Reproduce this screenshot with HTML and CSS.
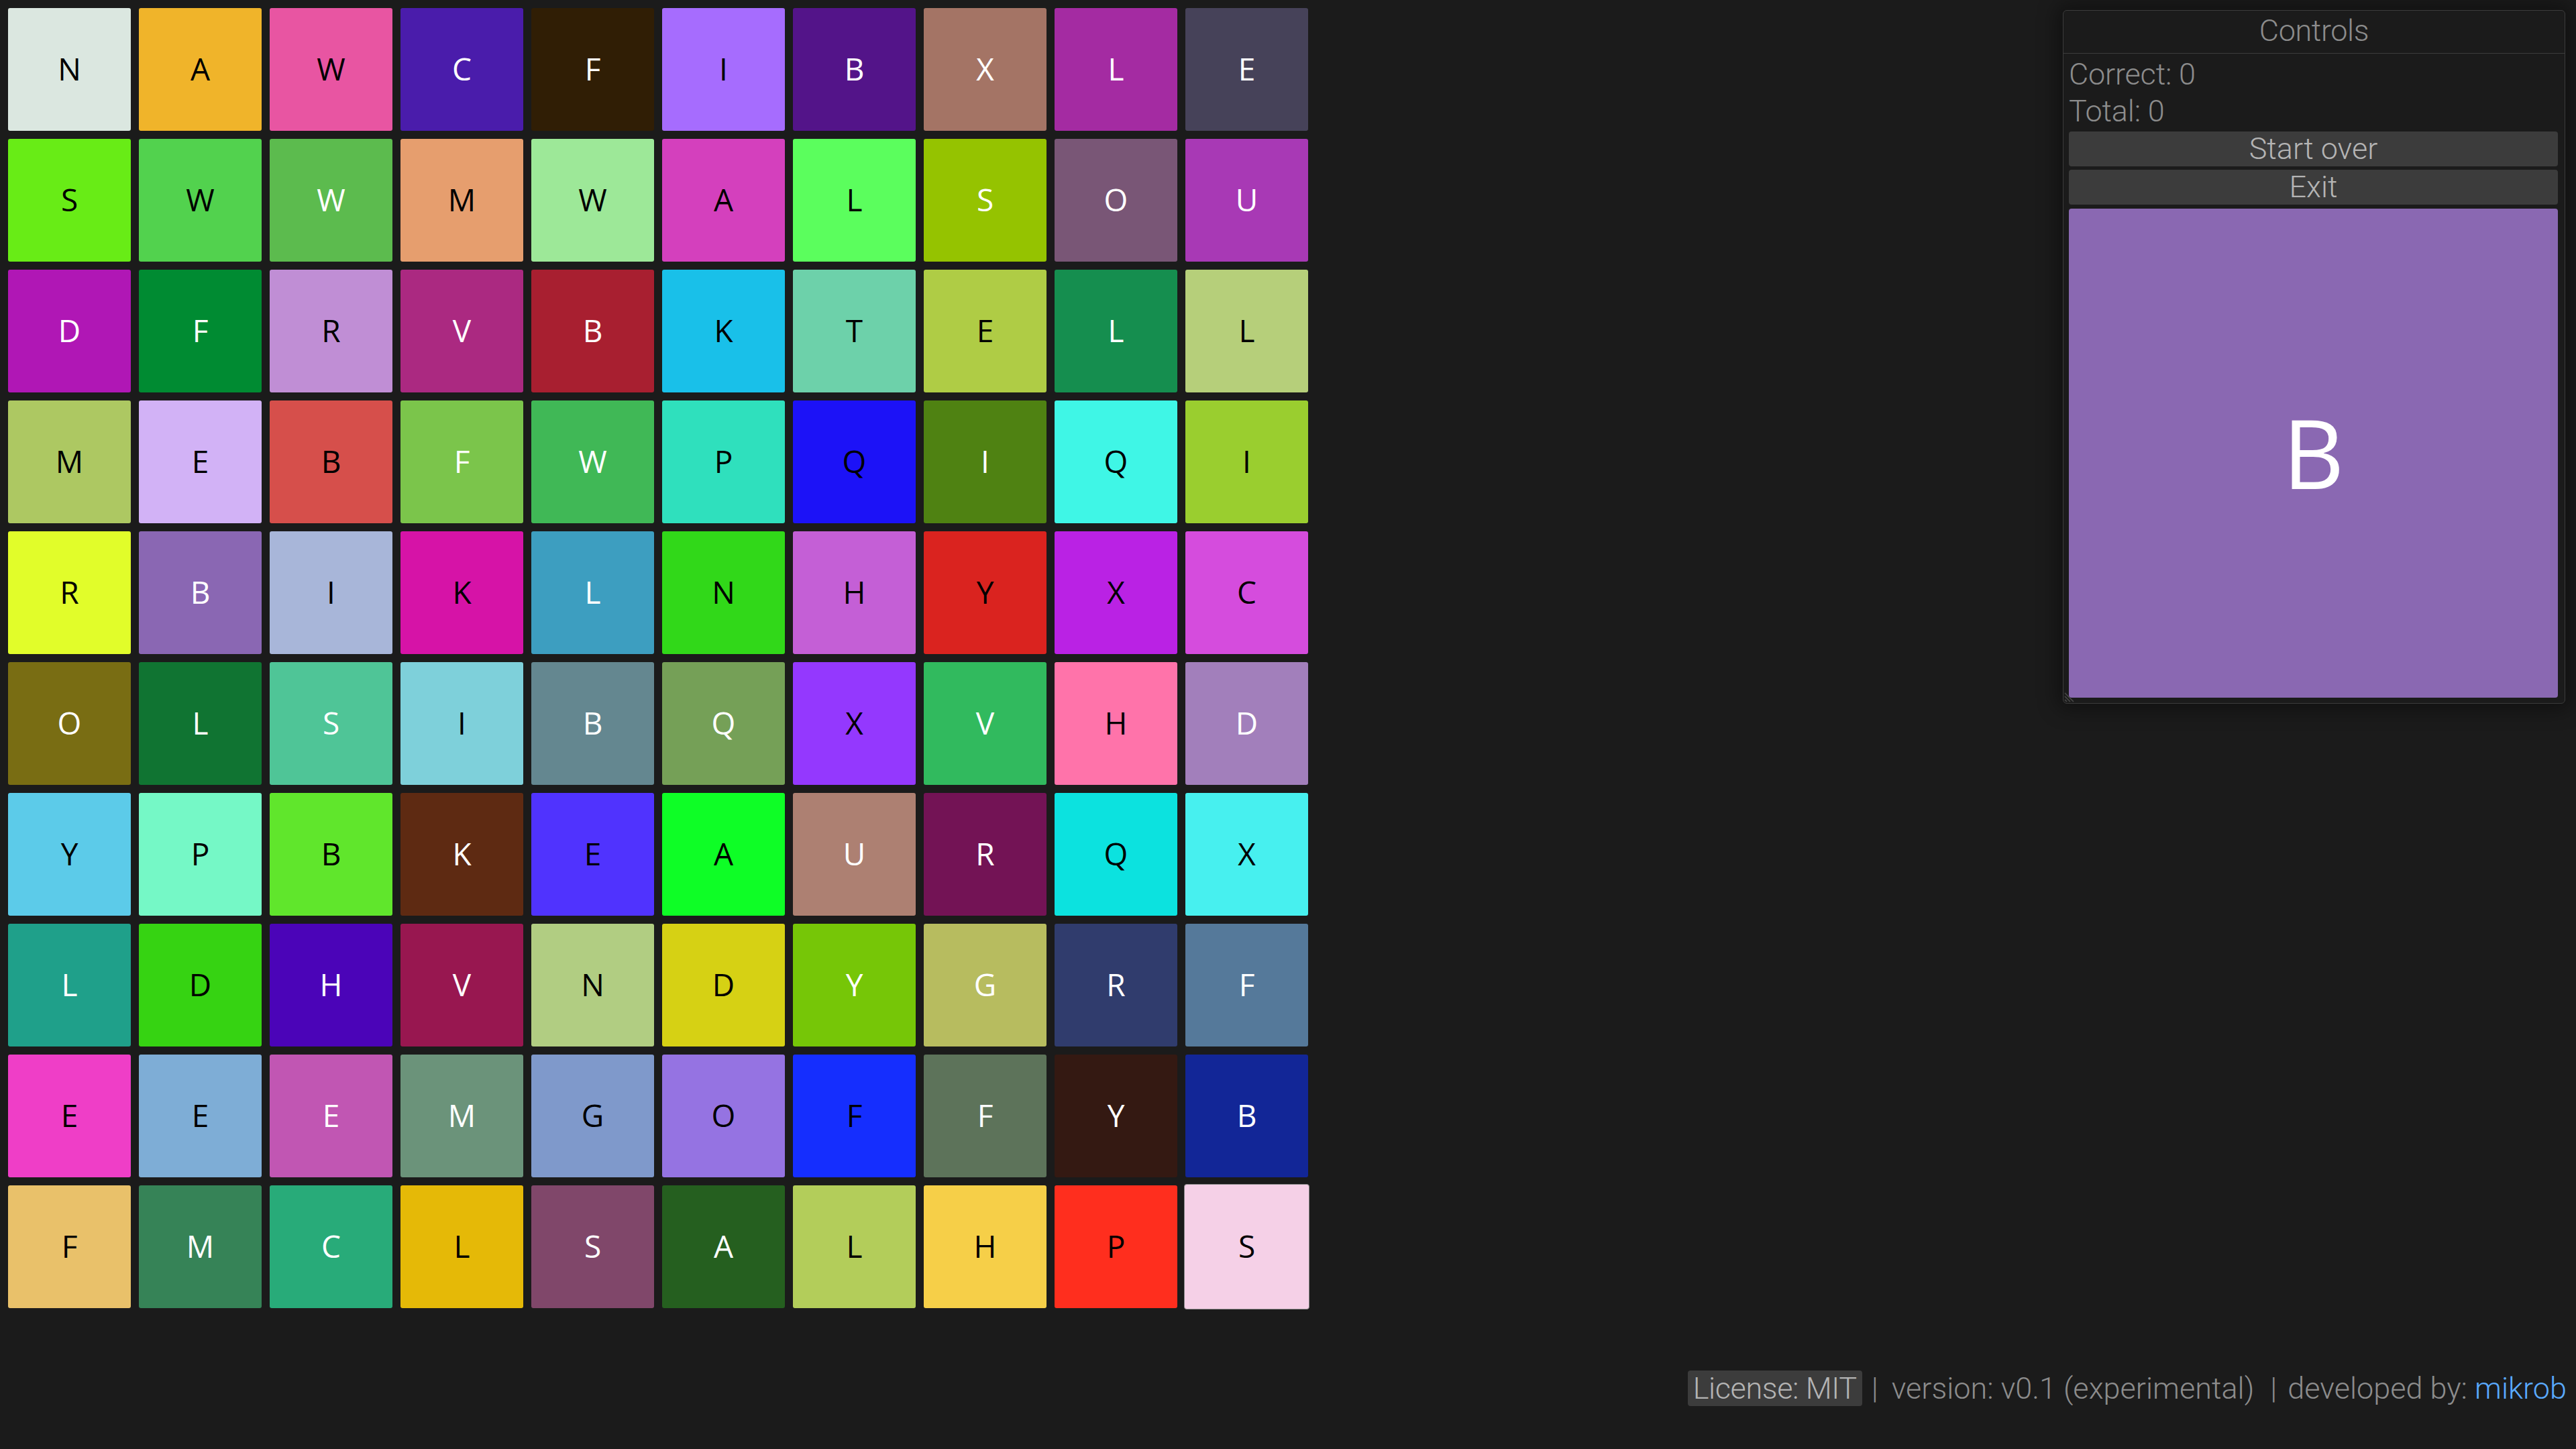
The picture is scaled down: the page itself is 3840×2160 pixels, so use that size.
FILE: index.html
```html
<!DOCTYPE html>
<html lang="en">
<head>
<meta charset="utf-8">
<title>Letters</title>
<link rel="stylesheet" href="styles.css">
</head>
<body>
<main class="board">
  <div class="grid">
    <div class="cell on-light" style="background:#dbe7e0">N</div>
    <div class="cell on-light" style="background:#f0b42a">A</div>
    <div class="cell on-light" style="background:#e855a2">W</div>
    <div class="cell on-dark" style="background:#4a1cab">C</div>
    <div class="cell on-dark" style="background:#301e05">F</div>
    <div class="cell on-light" style="background:#a66cfe">I</div>
    <div class="cell on-dark" style="background:#531489">B</div>
    <div class="cell on-dark" style="background:#a47465">X</div>
    <div class="cell on-dark" style="background:#a42ba2">L</div>
    <div class="cell on-dark" style="background:#464259">E</div>

    <div class="cell on-light" style="background:#68ec16">S</div>
    <div class="cell on-light" style="background:#52d24e">W</div>
    <div class="cell on-dark" style="background:#5cbb4e">W</div>
    <div class="cell on-light" style="background:#e69e6e">M</div>
    <div class="cell on-light" style="background:#9de898">W</div>
    <div class="cell on-light" style="background:#d440bd">A</div>
    <div class="cell on-light" style="background:#5bfe5d">L</div>
    <div class="cell on-dark" style="background:#95c300">S</div>
    <div class="cell on-dark" style="background:#795676">O</div>
    <div class="cell on-dark" style="background:#a839b5">U</div>

    <div class="cell on-dark" style="background:#b017b5">D</div>
    <div class="cell on-dark" style="background:#008b32">F</div>
    <div class="cell on-light" style="background:#c08ed5">R</div>
    <div class="cell on-dark" style="background:#ab2981">V</div>
    <div class="cell on-dark" style="background:#a81f30">B</div>
    <div class="cell on-light" style="background:#19c0e9">K</div>
    <div class="cell on-light" style="background:#6dd1aa">T</div>
    <div class="cell on-light" style="background:#afcc45">E</div>
    <div class="cell on-dark" style="background:#158e4f">L</div>
    <div class="cell on-light" style="background:#b6cf7a">L</div>

    <div class="cell on-light" style="background:#adc862">M</div>
    <div class="cell on-light" style="background:#d2b2f6">E</div>
    <div class="cell on-light" style="background:#d64f4b">B</div>
    <div class="cell on-dark" style="background:#7bc54b">F</div>
    <div class="cell on-dark" style="background:#40b856">W</div>
    <div class="cell on-light" style="background:#2fe0bd">P</div>
    <div class="cell on-light" style="background:#1c12f7">Q</div>
    <div class="cell on-dark" style="background:#4f8212">I</div>
    <div class="cell on-light" style="background:#3ff6e6">Q</div>
    <div class="cell on-light" style="background:#9ace2f">I</div>

    <div class="cell on-light" style="background:#e1fd2a">R</div>
    <div class="cell on-dark" style="background:#8a67b3">B</div>
    <div class="cell on-light" style="background:#a8b6d9">I</div>
    <div class="cell on-light" style="background:#d613a7">K</div>
    <div class="cell on-dark" style="background:#3d9ec0">L</div>
    <div class="cell on-light" style="background:#31d819">N</div>
    <div class="cell on-light" style="background:#c45fd6">H</div>
    <div class="cell on-light" style="background:#da231f">Y</div>
    <div class="cell on-light" style="background:#ba22e4">X</div>
    <div class="cell on-light" style="background:#d54cdd">C</div>

    <div class="cell on-dark" style="background:#796d13">O</div>
    <div class="cell on-dark" style="background:#107432">L</div>
    <div class="cell on-dark" style="background:#4fc597">S</div>
    <div class="cell on-light" style="background:#7ed0da">I</div>
    <div class="cell on-dark" style="background:#648790">B</div>
    <div class="cell on-dark" style="background:#75a057">Q</div>
    <div class="cell on-light" style="background:#9438fe">X</div>
    <div class="cell on-dark" style="background:#31ba5e">V</div>
    <div class="cell on-light" style="background:#ff73aa">H</div>
    <div class="cell on-dark" style="background:#a27fbb">D</div>

    <div class="cell on-light" style="background:#5ccbe9">Y</div>
    <div class="cell on-light" style="background:#75f8c6">P</div>
    <div class="cell on-light" style="background:#60e62c">B</div>
    <div class="cell on-dark" style="background:#5e2a12">K</div>
    <div class="cell on-light" style="background:#5033fe">E</div>
    <div class="cell on-light" style="background:#0efe26">A</div>
    <div class="cell on-dark" style="background:#ad8072">U</div>
    <div class="cell on-dark" style="background:#731355">R</div>
    <div class="cell on-light" style="background:#0ce2df">Q</div>
    <div class="cell on-light" style="background:#47f0ef">X</div>

    <div class="cell on-dark" style="background:#1fa08a">L</div>
    <div class="cell on-light" style="background:#36d312">D</div>
    <div class="cell on-dark" style="background:#4b04b8">H</div>
    <div class="cell on-dark" style="background:#981750">V</div>
    <div class="cell on-light" style="background:#b1cd82">N</div>
    <div class="cell on-light" style="background:#d6d114">D</div>
    <div class="cell on-dark" style="background:#76c607">Y</div>
    <div class="cell on-dark" style="background:#b7bc5f">G</div>
    <div class="cell on-dark" style="background:#303c6d">R</div>
    <div class="cell on-dark" style="background:#55799a">F</div>

    <div class="cell on-light" style="background:#ef3ec7">E</div>
    <div class="cell on-light" style="background:#7eadd6">E</div>
    <div class="cell on-dark" style="background:#c156b3">E</div>
    <div class="cell on-dark" style="background:#6b937a">M</div>
    <div class="cell on-light" style="background:#7f99cb">G</div>
    <div class="cell on-light" style="background:#9573e2">O</div>
    <div class="cell on-light" style="background:#152efe">F</div>
    <div class="cell on-dark" style="background:#5d735a">F</div>
    <div class="cell on-dark" style="background:#341912">Y</div>
    <div class="cell on-dark" style="background:#122697">B</div>

    <div class="cell on-light" style="background:#e9c16a">F</div>
    <div class="cell on-dark" style="background:#368357">M</div>
    <div class="cell on-dark" style="background:#28ab79">C</div>
    <div class="cell on-light" style="background:#e5b907">L</div>
    <div class="cell on-dark" style="background:#80476a">S</div>
    <div class="cell on-dark" style="background:#255f1f">A</div>
    <div class="cell on-light" style="background:#b3cd5a">L</div>
    <div class="cell on-light" style="background:#f6cf48">H</div>
    <div class="cell on-light" style="background:#ff2e1e">P</div>
    <div class="cell on-light is-hovered" style="background:#f5d0e7">S</div>
  </div>
</main>

<section class="window">
  <header class="window-title">Controls</header>
  <div class="window-body">
    <p class="label">Correct: 0</p>
    <p class="label">Total: 0</p>
    <button class="btn" type="button">Start over</button>
    <button class="btn" type="button">Exit</button>
    <div class="target" style="background:#8a68b2">B</div>
  </div>
  <svg class="resize-grip" width="18" height="18" viewBox="0 0 18 18" aria-hidden="true">
    <path d="M1 4 L14 17 M1 9 L9 17 M1 14 L4 17" stroke="#4a4a4a" stroke-width="1.5" fill="none"/>
  </svg>
</section>

<footer class="footer">
  <span class="badge">License: MIT</span>
  <span class="sep sep-first">|</span>
  <span class="meta">version: v0.1 (experimental)</span>
  <span class="sep sep-second">|</span>
  <span class="meta">developed by:&nbsp;</span>
  <a class="link" href="#">mikrob</a>
</footer>
</body>
</html>
```

FILE: styles.css
```css
html, body {
  margin: 0;
  padding: 0;
}

body {
  background: #1b1b1b;
  min-height: 100vh;
  display: flex;
  flex-direction: column;
  font-family: Roboto, "Liberation Sans", sans-serif;
  font-weight: 300;
  color: #8c8c8c;
}

.board {
  padding: 12px;
}

.grid {
  display: grid;
  grid-template-columns: repeat(10, 183px);
  grid-auto-rows: 183px;
  gap: 12px;
}

.cell {
  border-radius: 3px;
  display: flex;
  align-items: center;
  justify-content: center;
  padding-bottom: 3px;
  box-sizing: border-box;
  font-family: "Open Sans", "Noto Sans", sans-serif;
  font-weight: 400;
  font-size: 46px;
  line-height: 1;
}

.on-light { color: #000; }
.on-dark { color: #fff; }

.cell.is-hovered {
  margin: -2px;
  border: 1px solid #8a8a8a;
  border-radius: 4px;
}

/* floating window */
.window {
  position: absolute;
  left: 3075px;
  top: 15px;
  width: 749px;
  box-sizing: border-box;
  border: 1px solid #3c3c3c;
  border-radius: 6px;
  background: #1b1b1b;
  box-shadow: 0 0 30px 8px rgba(0, 0, 0, 0.4);
}

.window-title {
  height: 64px;
  box-sizing: border-box;
  padding-bottom: 4px;
  display: flex;
  align-items: center;
  justify-content: center;
  border-bottom: 1px solid #3c3c3c;
  font-size: 45px;
  letter-spacing: -0.4px;
  color: #8c8c8c;
}

.window-body {
  padding: 3px 10px 8px 8px;
  display: flex;
  flex-direction: column;
}

.label {
  margin: 0;
  font-size: 45px;
  line-height: 55px;
  letter-spacing: -0.2px;
  color: #8c8c8c;
}

.btn {
  display: block;
  width: 100%;
  height: 52px;
  margin-top: 5px;
  padding: 0;
  border: 0;
  border-radius: 4px;
  background: #3c3c3c;
  color: #b4b4b4;
  font-family: inherit;
  font-weight: 300;
  font-size: 45px;
  letter-spacing: 0;
  line-height: 52px;
}

.label + .btn {
  margin-top: 3px;
}

.target {
  margin-top: 6px;
  height: 729px;
  border-radius: 4px;
  display: flex;
  align-items: center;
  justify-content: center;
  padding-bottom: 4px;
  box-sizing: border-box;
  color: #fff;
  font-family: "Open Sans", "Noto Sans", sans-serif;
  font-weight: 400;
  font-size: 142px;
  line-height: 1;
}

.resize-grip {
  position: absolute;
  left: 1px;
  bottom: 1px;
}

/* footer */
.footer {
  margin-top: auto;
  display: flex;
  justify-content: flex-end;
  align-items: center;
  padding: 0 14px 64px 0;
  font-size: 45px;
  letter-spacing: 0;
  color: #8c8c8c;
}

.badge {
  background: #3c3c3c;
  color: #b4b4b4;
  border-radius: 4px;
  padding: 0 8px;
  height: 53px;
  line-height: 53px;
  letter-spacing: -0.4px;
}

.meta {
  white-space: pre;
}

.sep-first {
  margin: 0 20px 0 14px;
}

.sep-second {
  margin: 0 16px 0 24px;
}

.link {
  color: #5aaaff;
  text-decoration: none;
}
```
